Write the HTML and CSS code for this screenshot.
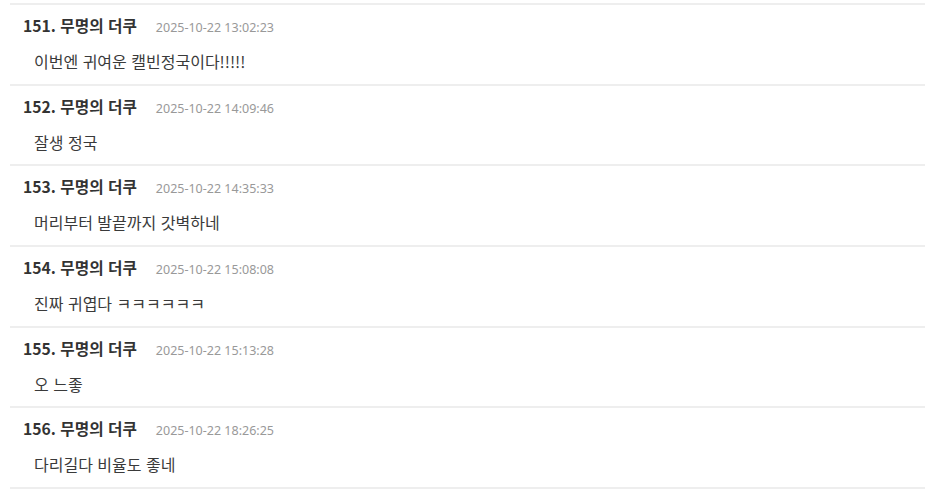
FILE: index.html
```html
<!DOCTYPE html>
<html lang="ko">
<head>
<meta charset="utf-8">
<link rel="stylesheet" href="styles.css">
</head>
<body>
<ul class="comments">
  <li class="comment">
    <div class="meta"><span class="author">151. 무명의 더쿠</span><span class="date">2025-10-22 13:02:23</span></div>
    <div class="text">이번엔 귀여운 캘빈정국이다!!!!!</div>
  </li>
  <li class="comment">
    <div class="meta"><span class="author">152. 무명의 더쿠</span><span class="date">2025-10-22 14:09:46</span></div>
    <div class="text">잘생 정국</div>
  </li>
  <li class="comment">
    <div class="meta"><span class="author">153. 무명의 더쿠</span><span class="date">2025-10-22 14:35:33</span></div>
    <div class="text">머리부터 발끝까지 갓벽하네</div>
  </li>
  <li class="comment">
    <div class="meta"><span class="author">154. 무명의 더쿠</span><span class="date">2025-10-22 15:08:08</span></div>
    <div class="text">진짜 귀엽다 ㅋㅋㅋㅋㅋㅋ</div>
  </li>
  <li class="comment">
    <div class="meta"><span class="author">155. 무명의 더쿠</span><span class="date">2025-10-22 15:13:28</span></div>
    <div class="text">오 느좋</div>
  </li>
  <li class="comment">
    <div class="meta"><span class="author">156. 무명의 더쿠</span><span class="date">2025-10-22 18:26:25</span></div>
    <div class="text">다리길다 비율도 좋네</div>
  </li>
</ul>
</body>
</html>
```
FILE: styles.css
```css
html, body {
  margin: 0;
  padding: 0;
  background: #fff;
}
body {
  font-family: "Noto Sans CJK KR", "Noto Sans", sans-serif;
  color: #333;
}
.comments {
  list-style: none;
  margin: 3px 0 0 10px;
  padding: 0;
  border-top: 2px solid #eeeeee;
}
.comment {
  height: 78.67px;
  box-sizing: content-box;
  border-bottom: 2px solid #eeeeee;
  padding: 0 0 0 13px;
}
.meta {
  display: flex;
  align-items: baseline;
  gap: 19px;
  padding-top: 11px;
  height: 20px;
  line-height: 20px;
}
.author {
  font-size: 15.7px;
  font-weight: 700;
  color: #333;
}
.date {
  font-family: "Noto Sans", "Open Sans", sans-serif;
  font-size: 12.5px;
  color: #999;
}
.text {
  margin-top: 14px;
  padding-left: 11px;
  font-size: 16px;
  line-height: 22px;
  color: #3a3a3a;
}
```
